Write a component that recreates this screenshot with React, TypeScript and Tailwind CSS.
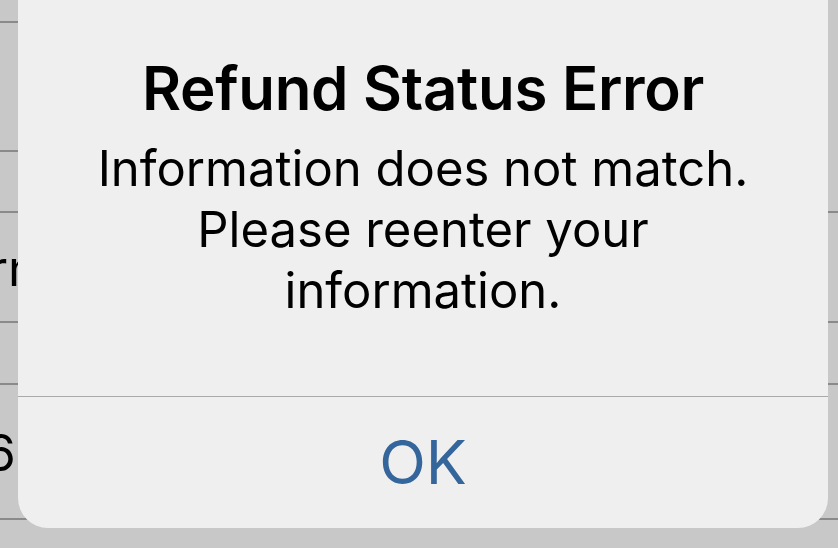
import React from "react";

const rows = [
  { h: "h-[23px]", short: true, label: "", shift: "" },
  { h: "h-[129px]", short: true, label: "", shift: "" },
  { h: "h-[61px]", short: false, label: "", shift: "" },
  { h: "h-[110px]", short: false, label: "Return", shift: "ml-[-118px]" },
  { h: "h-[62px]", short: false, label: "", shift: "" },
  { h: "h-[135px]", short: false, label: "$1,276", shift: "ml-[-140px]" },
];

const App: React.FC = () => {
  return (
    <div
      className="relative w-[838px] h-[548px] overflow-hidden bg-[#c8c8c8]"
      style={{ fontFamily: "Inter, 'Noto Sans', sans-serif" }}
    >
      {/* Background list behind the alert */}
      <div className="flex flex-col">
        {rows.map((row, index) => (
          <div key={index} className={`${row.h} relative flex items-center`}>
            {row.label && (
              <span className={`${row.shift} text-[50px] text-black leading-none whitespace-nowrap`}>
                {row.label}
              </span>
            )}
            <div
              className={`absolute bottom-0 left-0 h-[2px] bg-[#8a8a8a] ${
                row.short ? "w-[100px]" : "w-full"
              }`}
            />
          </div>
        ))}
      </div>

      {/* Alert */}
      <div className="absolute left-[18px] top-[-30px] w-[810px] h-[558px] rounded-[30px] bg-[#efefef] flex flex-col">
        <div className="h-[426px] flex flex-col items-center pt-[84px] text-black">
          <h1 className="text-[60px] font-semibold leading-[68px] tracking-[-0.3px]">
            Refund Status Error
          </h1>
          <p className="mt-[16px] text-center text-[49px] leading-[61px]">
            Information does not match.
            <br />
            Please reenter your
            <br />
            information.
          </p>
        </div>
        <div className="h-px bg-[#a9a9a9]" />
        <div className="flex-1 flex items-center justify-center">
          <span className="text-[61px] text-[#34659b] leading-none">OK</span>
        </div>
      </div>
    </div>
  );
};

export default App;
